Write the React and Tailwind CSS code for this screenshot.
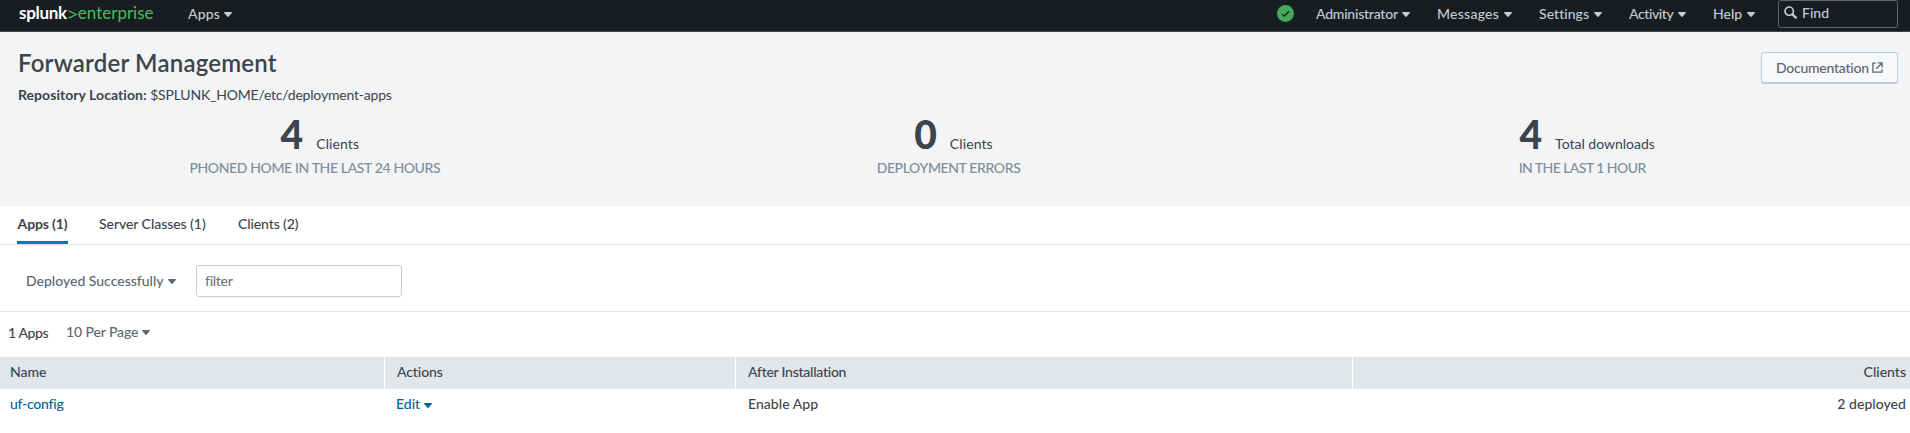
import React from "react";

function Caret({ className = "" }) {
  return (
    <svg className={`h-[5px] w-2 shrink-0 ${className}`} viewBox="0 0 8 5" fill="currentColor">
      <path d="M0.6 0h6.8c.5 0 .7.5.4.9L4.5 4.7c-.3.3-.7.3-1 0L.2.9C-.1.5.1 0 .6 0z" />
    </svg>
  );
}

function NavItem({ label, width, tracking }) {
  return (
    <div className={`flex shrink-0 items-center justify-between ${width}`}>
      <span className={tracking}>{label}</span>
      <Caret className="mt-[3px]" />
    </div>
  );
}

function NavBar() {
  return (
    <header className="flex h-8 items-start border-b border-[#3c444d] bg-[#171d21] font-medium text-[#c3cbd4]">
      <div className="ml-[18px] flex h-[25px] w-[170px] shrink-0 items-center pl-px text-[17px] leading-[25px] font-normal">
        <span className="font-bold tracking-[-0.3px] text-white">splunk</span>
        <svg className="mt-[3px] ml-px h-[9px] w-2.5" viewBox="0 0 10 9" fill="none" stroke="#45bf5f" strokeWidth="1.3">
          <path d="M0.5 0.8 8.6 4.5 0.5 8.2" />
        </svg>
        <span className="text-[#45bf5f]">enterprise</span>
      </div>
      <div className="flex h-[26px] items-center">
        <NavItem label="Apps" width="w-[44px]" tracking="tracking-[0.15px]" />
      </div>
      <div className="ml-auto flex h-[26px] items-center">
        <svg className="mt-[1px] mr-[22px] size-[17px]" viewBox="0 0 17 17">
          <circle cx="8.5" cy="8.5" r="8.5" fill="#46a758" />
          <path d="M4.9 8.9 7.3 11.2 12 6.2" fill="none" stroke="#171d21" strokeWidth="1.3" />
        </svg>
        <NavItem label="Administrator" width="w-[94px]" tracking="tracking-[-0.22px]" />
        <div className="w-[27px]" />
        <NavItem label="Messages" width="w-[75px]" tracking="tracking-[0.25px]" />
        <div className="w-[27px]" />
        <NavItem label="Settings" width="w-[63px]" tracking="tracking-[0.05px]" />
        <div className="w-[27px]" />
        <NavItem label="Activity" width="w-[57px]" tracking="tracking-[-0.4px]" />
        <div className="w-[27px]" />
        <NavItem label="Help" width="w-[42px]" tracking="" />
      </div>
      <div className="mr-3 ml-[23px] flex h-7 w-[120px] items-start rounded-[3px] border border-[#5c6773]">
        <svg className="mt-[5px] ml-[5px] size-[13px]" viewBox="0 0 13 13" fill="none" stroke="currentColor">
          <circle cx="5.2" cy="5.2" r="4.2" strokeWidth="1.7" />
          <path d="M8.2 8.2 11.8 11.6" strokeWidth="2.3" strokeLinecap="round" />
        </svg>
        <span className="mt-0.5 ml-[5px] leading-5">Find</span>
      </div>
    </header>
  );
}

function Stat({ value, unit, unitClass, label, labelClass }) {
  return (
    <div className="flex flex-1 flex-col items-center">
      <div className="flex h-[37px] items-baseline pl-[10px]">
        <span className="text-[39px] leading-[37px] font-black">{value}</span>
        <span className={`ml-[13px] ${unitClass}`}>{unit}</span>
      </div>
      <div className={`mt-[5px] leading-5 font-medium text-[#818d99] ${labelClass}`}>{label}</div>
    </div>
  );
}

function Summary() {
  return (
    <section className="h-[174px] bg-[#f2f4f5]">
      <div className="flex justify-between pr-3 pl-[18px]">
        <div>
          <h1 className="mt-[15px] text-[24px] leading-8 font-semibold tracking-[0.2px]">Forwarder Management</h1>
          <p className="mt-[6px] leading-5">
            <strong className="font-bold tracking-[0.05px]">Repository Location:</strong>{" "}
            <span className="tracking-[-0.2px]">$SPLUNK_HOME/etc/deployment-apps</span>
          </p>
        </div>
        <button className="mt-5 flex h-8 w-[137px] items-center rounded-[3px] border border-b-2 border-[#c3cbd4] bg-[#f7f8fa] pb-px pl-[14px] font-medium text-[#5c6773]">
          <span className="tracking-[-0.25px]">Documentation</span>
          <svg className="ml-[3px] size-[11px]" viewBox="0 0 11 11" fill="none" stroke="currentColor" strokeWidth="1.3">
            <path d="M3.8 1.1H.9v9h9V7.2M5.6 .9h4.5v4.5M10 1 4.2 6.8" />
          </svg>
        </button>
      </div>
      <div className="-ml-0.5 mt-[11px] flex w-[1901px]">
        <Stat value="4" unit="Clients" unitClass="tracking-[0.1px]" label="PHONED HOME IN THE LAST 24 HOURS" labelClass="tracking-[-0.37px]" />
        <Stat value="0" unit="Clients" unitClass="tracking-[0.1px]" label="DEPLOYMENT ERRORS" labelClass="tracking-[-0.37px]" />
        <Stat value="4" unit="Total downloads" unitClass="" label="IN THE LAST 1 HOUR" labelClass="tracking-[-0.55px]" />
      </div>
    </section>
  );
}

function Tabs() {
  return (
    <nav className="flex h-[39px] border-b border-[#e1e6eb] pl-[17px]">
      <div className="flex w-[51px] justify-center border-b-[3px] border-[#007abd] pt-2 leading-5 font-bold tracking-[-0.15px] whitespace-nowrap">
        Apps (1)
      </div>
      <div className="ml-[31px] w-[139px] pt-2 leading-5 font-medium tracking-[-0.05px]">Server Classes (1)</div>
      <div className="pt-2 leading-5 font-medium tracking-[-0.1px]">Clients (2)</div>
    </nav>
  );
}

function Filters() {
  return (
    <div className="flex h-[67px] items-start border-b border-[#e1e6eb] pt-5">
      <div className="ml-[26px] flex h-8 w-[150px] items-center justify-between pb-0.5 font-medium text-[#5c6773]">
        <span>Deployed Successfully</span>
        <Caret className="mt-0.5" />
      </div>
      <input
        className="ml-5 h-8 w-[206px] rounded-[3px] border border-[#c3cbd4] px-2 pb-0.5 font-medium tracking-[-0.3px] placeholder:text-[#6b7785]"
        placeholder="filter"
      />
    </div>
  );
}

function AppsTable() {
  return (
    <section className="font-medium">
      <div className="flex h-[45px] pl-2">
        <span className="mt-[11px] w-[58px] leading-5 tracking-[-0.4px]">1 Apps</span>
        <div className="mt-[9px] flex h-5 w-[84px] items-center justify-between text-[#5c6773]">
          <span className="tracking-[-0.1px]">10 Per Page</span>
          <Caret className="mt-0.5" />
        </div>
      </div>
      <div className="grid h-8 grid-cols-[384px_350px_616px_1fr] gap-px leading-[30px]">
        <div className="bg-[#e1e6ea] pl-2.5">Name</div>
        <div className="bg-[#e1e6ea] pl-3 tracking-[-0.1px]">Actions</div>
        <div className="bg-[#e1e6ea] pl-3 tracking-[-0.25px]">After Installation</div>
        <div className="bg-[#e1e6ea] pr-1 text-right">Clients</div>
      </div>
      <div className="grid h-8 grid-cols-[384px_350px_616px_1fr] gap-px leading-[30px]">
        <div className="pl-2.5 tracking-[-0.25px] text-[#006499]">uf-config</div>
        <div className="flex h-[30px] items-center pl-[11px] text-[#006499]">
          <span>Edit</span>
          <Caret className="mt-0.5 ml-1" />
        </div>
        <div className="pl-3 tracking-[0.05px]">Enable App</div>
        <div className="pr-1 text-right tracking-[0.05px]">2 deployed</div>
      </div>
    </section>
  );
}

export default function App() {
  return (
    <main className="h-[433px] w-full overflow-hidden bg-white font-['Lato','Liberation_Sans',sans-serif] text-[14px] text-[#3c444d]">
      <NavBar />
      <Summary />
      <Tabs />
      <Filters />
      <AppsTable />
    </main>
  );
}
